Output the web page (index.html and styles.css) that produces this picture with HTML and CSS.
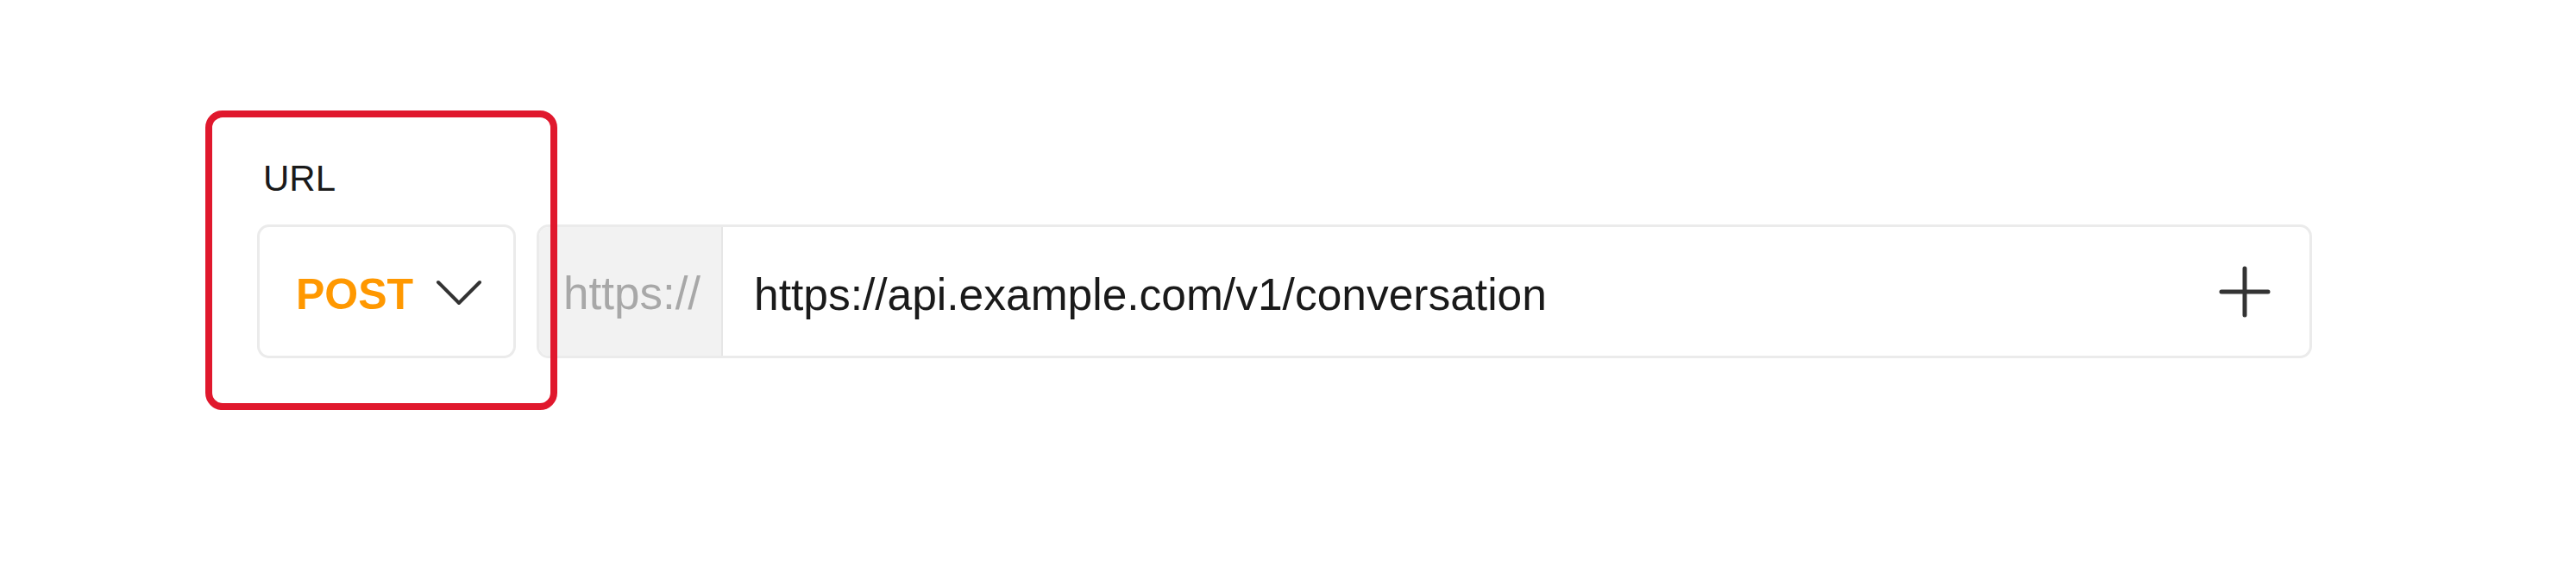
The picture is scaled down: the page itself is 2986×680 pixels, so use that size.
FILE: index.html
```html
<!DOCTYPE html>
<html lang="en">
<head>
  <meta charset="UTF-8">
  <meta name="viewport" content="width=device-width, initial-scale=1.0">
  <title>URL</title>
  <link rel="stylesheet" href="styles.css">
</head>
<body>
  <div class="page">
    <div class="field">
      <label class="field-label">URL</label>
      <div class="url-row">
        <div class="method-select">
          <span class="method">POST</span>
          <svg class="chevron" width="54" height="32" viewBox="0 0 54 32">
            <path d="M3 4 L27 28 L51 4" fill="none" stroke="#333" stroke-width="4" stroke-linecap="round" stroke-linejoin="round"/>
          </svg>
        </div>
        <div class="url-input">
          <span class="url-prefix">https://</span>
          <span class="url-value">https://api.example.com/v1/conversation</span>
          <a href="javascript:void(0);" class="btn-add">
            <svg width="60" height="60" viewBox="0 0 60 60">
              <path d="M30 3 V57 M3 30 H57" fill="none" stroke="#333" stroke-width="5" stroke-linecap="round"/>
            </svg>
          </a>
        </div>
      </div>
    </div>
    <!-- 高亮框 -->
    <div class="highlight"></div>
  </div>
</body>
</html>
```

FILE: styles.css
```css
* {
  margin: 0;
  padding: 0;
  box-sizing: border-box;
}
a {
  color: inherit;
  text-decoration: none;
}
body {
  background: #fff;
  font-family: "Liberation Sans", Arial, Helvetica, sans-serif;
  color: #1a1a1a;
}

.page {
  position: relative;
  padding: 182px 0 0 298px;
  height: 680px;
}

/* 表单字段 */
.field-label {
  display: block;
  padding-left: 7px;
  font-size: 42px;
  line-height: 50px;
  color: #1a1a1a;
  margin-bottom: 28px;
}
.url-row {
  display: flex;
  gap: 24px;
  width: 2382px;
}

/* 请求方法 */
.method-select {
  display: flex;
  align-items: center;
  justify-content: space-between;
  width: 300px;
  height: 155px;
  padding: 6px 36px 0 42px;
  border: 3px solid #ebebeb;
  border-radius: 14px;
  background: #fff;
  cursor: pointer;
}
.method-select .method {
  font-size: 50px;
  font-weight: 700;
  color: #ff9800;
}
.method-select .chevron {
  display: block;
  margin-bottom: 4px;
}

/* 地址输入框 */
.url-input {
  flex: 1;
  display: flex;
  align-items: center;
  height: 155px;
  border: 3px solid #ebebeb;
  border-radius: 14px;
  overflow: hidden;
}
.url-input .url-prefix {
  display: flex;
  align-items: center;
  align-self: stretch;
  width: 213px;
  padding: 4px 0 0 28px;
  font-size: 53px;
  color: #a8a8a8;
  background: #f2f2f2;
  border-right: 2px solid #e6e6e6;
}
.url-input .url-value {
  flex: 1;
  padding: 6px 0 0 36px;
  font-size: 51.5px;
  color: #1a1a1a;
}
.url-input .btn-add {
  display: block;
  margin-right: 45px;
}
.url-input .btn-add svg {
  display: block;
}

/* 红色标注框 */
.highlight {
  position: absolute;
  top: 128px;
  left: 238px;
  width: 408px;
  height: 347px;
  border: 8px solid #e0182d;
  border-radius: 20px;
  pointer-events: none;
}
```
